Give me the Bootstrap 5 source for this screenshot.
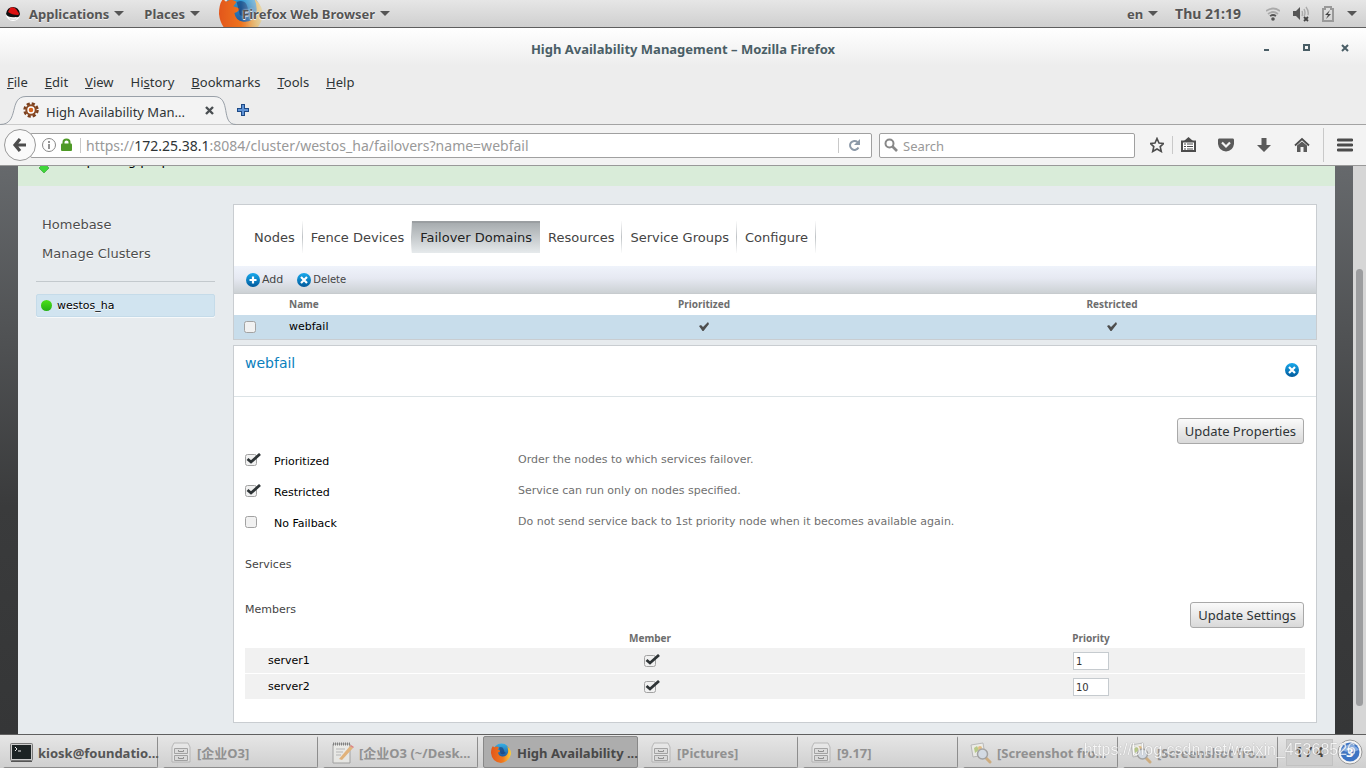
<!DOCTYPE html>
<html lang="en">
<head>
<meta charset="utf-8">
<meta name="viewport" content="width=device-width, initial-scale=1">
<title>High Availability Management</title>
<link href="https://cdn.jsdelivr.net/npm/bootstrap@5.3.0/dist/css/bootstrap.min.css" rel="stylesheet">
<style>
:root { --ui: "Noto Sans", "Noto Sans CJK SC", sans-serif; --page: "DejaVu Sans", "Noto Sans CJK SC", sans-serif; }
body { font: 13px/20px var(--ui); color: #2e3436; background: #ededed; }
svg { display: block; flex: none; }
a { color: inherit; text-decoration: none; }
button { color: inherit; }
.plain { border: 0; background: none; padding: 0; }
/* desktop panel */
.top-panel { height: 28px; background: linear-gradient(#e6e6e6, #cfcfcf); border-bottom: 1px solid #5e5e5e; color: #555; font-weight: 700; padding: 0 9px 0 5px; text-shadow: 0 1px #eee; }
.top-panel .plain { font-weight: 700; display: flex; align-items: center; gap: 5px; text-shadow: inherit; }
.status { gap: 13px; }
.clock { font-size: 14px; margin-right: 12px; }
.caret { width: 0; height: 0; border: 5px solid transparent; border-top-color: #555; border-bottom: 0; }
.fox-btn { position: relative; margin-left: 42px; }
.fox-btn svg { position: absolute; left: -23px; top: -12px; z-index: 0; }
.fox-btn span { position: relative; text-shadow: 0 0 2px #fff, 0 1px #eee; }
/* browser chrome */
.title-row { height: 38px; background: linear-gradient(#fff, #ededed); color: #4a5e66; font-weight: 700; }
.win-btns { right: 16px; top: 13px; gap: 28px; }
.menu-row { height: 30px; padding: 2px 7px 0; gap: 17px; }
.tab-row { height: 29px; border-bottom: 1px solid #a3a3a3; }
.page-tab { width: 236px; height: 29px; padding-left: 23px; }
.page-tab .tab-shape { position: absolute; left: 0; top: 0; }
.page-tab > * { position: relative; }
.page-tab a { padding: 3px 0 0 7px; }
.nav-row { height: 41px; background: #f3f3f3; border-bottom: 1px solid #999; padding: 0 13px 0 4px; }
.back { width: 32px; height: 32px; border: 1px solid #999; border-radius: 50%; background: #fafafa; z-index: 1; }
.field { height: 25px; background: #fff; border: 1px solid #a0a0a0; border-radius: 2px; }
.field input { border: 0; outline: 0; background: none; min-width: 0; padding: 2px 0 0; color: #2e3436; }
.field input::placeholder { color: #999; opacity: 1; }
.url-box { margin-left: -6px; padding-left: 11px; }
.url-text { color: #999; padding: 1px 0 0 5px; font-size: 14px; }
.url-text b { color: #2e3436; font-weight: 400; }
.vline { width: 1px; background: #c9c9c9; flex: none; }
.search-box { width: 256px; margin-left: 7px; }
/* web page */
.viewport-area { background: linear-gradient(#66696c, #3a3b3c 60%, #353637); min-height: 0; overflow: hidden; }
.sheet { background: #e7ebee; margin: 0 18px; font-family: var(--page); font-size: 11px; color: #000; min-width: 0; }
.flash { height: 20px; background: #d9ecd9; padding: 0 21px 17px; font-size: 13px; line-height: 16px; gap: 28px; overflow: hidden; }
.flash svg { margin-bottom: -4px; }
.track { width: 13px; background: #d6d6d6; }
.thumb { width: 7px; height: 77%; margin-top: 103px; border-radius: 4px; background: #9c9d9f; }
.side { width: 179px; font-size: 13px; line-height: 29px; color: #4d4d4d; text-shadow: 0 1px #fff; }
.side a { padding-left: 6px; }
.side hr { margin: 13px 0 12px; opacity: 1; border-color: #c3c9cd; }
.side .cluster { height: 23px; background: #d1e4f0; border: 1px solid #c5dbe9; border-radius: 2px; padding-left: 4px; gap: 5px; font-size: 11px; color: #000; box-shadow: 0 1px #f7f9fa; }
.dot { width: 11px; height: 11px; border-radius: 50%; background: linear-gradient(#4be01a, #25b015); }
.panel { background: #fff; border: 1px solid #c9cdd1; }
.tabs { padding: 16px 12px 13px; font-size: 13px; line-height: 34px; color: #444; }
.tabs a { height: 32px; padding: 0 7px 0 8px; border-right: 1px solid; border-image: linear-gradient(#fff, #bfc3c6, #fff) 1; }
.tabs a.on { background: linear-gradient(#a3a8ab, #e6eaec); box-shadow: inset 0 2px #9a9ea1; color: #222; border: 0; padding: 0 8px; }
.tools { height: 28px; padding: 0 12px; background: linear-gradient(#eff3fb, #e6e9f2 45%, #ccd1d4); border-bottom: 1px solid #c7cbce; color: #444; gap: 14px; }
.tools .plain { display: flex; align-items: center; gap: 2px; }
.grid { width: 100%; table-layout: fixed; border-collapse: collapse; }
.grid th { font: 700 10px/20px var(--ui); color: #6d6d6d; padding: 0; }
.grid td { height: 24px; line-height: 24px; padding: 0; }
.list-grid th { padding-bottom: 1px; }
.picked { background: #c8ddeb; }
.chk { appearance: none; width: 16px; height: 14px; margin: 0; display: block; background: url("data:image/svg+xml,%3Csvg xmlns='http://www.w3.org/2000/svg' width='16' height='14'%3E%3Crect x='.5' y='1.5' width='11' height='11' rx='2' fill='%23f1f1f1' stroke='%23a2a2a2'/%3E%3C/svg%3E") no-repeat; }
.chk:checked { background-image: url("data:image/svg+xml,%3Csvg xmlns='http://www.w3.org/2000/svg' width='16' height='14'%3E%3Crect x='.5' y='1.5' width='11' height='11' rx='2' fill='%23f1f1f1' stroke='%23a2a2a2'/%3E%3Cpath d='M2.500 6L6 9 15 1' fill='none' stroke='%232e3436' stroke-width='2.800'/%3E%3C/svg%3E"); }
.head { height: 51px; border-bottom: 1px solid #dce3e6; padding: 7px 17px 0 11px; }
.head h1 { font-size: 14px; line-height: 20px; color: #0a80bd; margin: 0; }
.push { font: 13px/24px var(--ui); height: 26px; padding: 0 7px; border: 1px solid #a9a9a9; border-radius: 3px; background: linear-gradient(#fafafa, #d9d9d9); color: #2e3436; }
.prop { height: 31px; color: #707070; }
.prop .lab { width: 273px; color: #000; gap: 13px; }
.prop label { padding-top: 4px; }
.sub { font-size: 11px; line-height: 16px; color: #444; margin: 0; }
.members { padding: 0 11px 23px; }
.members tbody tr { background: #f1f1f1; }
.members tbody tr + tr { border-top: 1px solid #fff; }
.members .grid td { height: 25px; line-height: 25px; }
.prio { width: 36px; height: 18px; display: block; margin: 1px auto 0; border: 1px solid #c6cbcf; padding: 0 2px; font: 10px/16px var(--page); color: #333; }
/* window list */
.tasks { height: 34px; border-top: 1px solid #5f5f5f; background: linear-gradient(#e6e6e6, #cfcfcf); padding: 1px 3px 0; gap: 5px; color: #555; font-weight: 700; position: relative; }
.task { flex: 0 1 155px; min-width: 0; height: 32px; display: flex; align-items: center; gap: 5px; padding: 1px 0 0 6px; border: 1px solid; border-color: transparent #8d8d8d #8d8d8d transparent; border-radius: 2px; background: none; font-weight: 700; color: #555; }
.task.dim { color: #919191; }
.task.dim svg { opacity: .55; }
.task.on { background: #adadad; border-color: #888; color: #484848; }
.pager { width: 47px; height: 27px; background: #cdcdcd; border: 1px solid #c2c2c2; font-size: 14px; color: #444; }
.stamp { position: absolute; right: 10px; top: 3px; font: 16px/24px "Liberation Sans", sans-serif; color: #fff; opacity: .75; text-shadow: 0 0 1px #777; }
</style>
</head>
<body class="vh-100 overflow-hidden d-flex flex-column">
<svg width="0" height="0" class="position-absolute">
  <defs>
    <linearGradient id="blue" x2="0" y2="1"><stop stop-color="#19a9ec"/><stop offset="1" stop-color="#00599b"/></linearGradient>
    <linearGradient id="flame" x2="1" y2="0"><stop stop-color="#e3561b"/><stop offset=".6" stop-color="#f07a1e"/><stop offset="1" stop-color="#fbd03a"/></linearGradient>
    <linearGradient id="sea" x2="0" y2="1"><stop stop-color="#35b0e6"/><stop offset="1" stop-color="#1b3f86"/></linearGradient>
    <linearGradient id="fade"><stop offset=".5" stop-color="#fff"/><stop offset="1" stop-color="#444"/></linearGradient>
    <mask id="fademask"><rect width="44" height="44" fill="url(#fade)"/></mask>
    <symbol id="fox" viewBox="0 0 20 20">
      <circle cx="10.500" cy="9" r="8.500" fill="url(#sea)"/>
      <path d="M2 3Q3 5 4 4Q6 3 8 4.500L6.500 6.500L9.500 7.500Q9 9 7 9.500Q7.500 13 11 13.500Q15.500 14 17 9.500Q17.500 6 16 3Q20 6 20 11Q18 19 10 20Q1 19 0 10Q0 5 2 3Z" fill="url(#flame)"/>
      <path d="M8 4.500Q12 3 13 7Q13 9.500 15 10Q12 12 9.500 10.500" fill="#17356f" opacity=".6"/>
    </symbol>
    <symbol id="cabinet" viewBox="0 0 20 22">
      <path d="M3 1H17L19 5V20H1V5Z" fill="#eee" stroke="#999"/><path d="M3.500 6.500H16.500V11.500H3.500ZM3.500 13.500H16.500V18.500H3.500Z" fill="#ddd" stroke="#777"/><path d="M7.500 8V9.500H12.500V8M7.500 15V16.500H12.500V15" fill="none" stroke="#555"/>
    </symbol>
    <symbol id="viewer" viewBox="0 0 22 22">
      <path d="M1 3L13 1L15 13L3 15Z" fill="#f7f7ee" stroke="#999"/><path d="M4 6L7 4L9 8L5 11Z" fill="#9aba42"/><circle cx="10" cy="6" r="2" fill="#e8a23a"/>
      <path d="M16 16L20 20" stroke="#c88c3a" stroke-width="3" stroke-linecap="round"/><circle cx="12.500" cy="12" r="5" fill="#cfdcec" stroke="#777" stroke-width="1.500"/>
    </symbol>
    <symbol id="cross" viewBox="0 0 14 14"><circle cx="7" cy="7" r="7" fill="url(#blue)"/><path d="M4 4L10 10M10 4L4 10" stroke="#fff" stroke-width="2.200"/></symbol>
    <symbol id="tick" viewBox="0 0 10 10"><path d="M0 4L2 3L4 5L9 0L10 2L4.500 9H3.500Z" fill="#4d4d4d"/></symbol>
  </defs>
</svg>

<header class="top-panel d-flex align-items-center flex-shrink-0 overflow-hidden">
  <svg width="16" height="16" viewBox="0 0 16 16" class="me-2"><circle cx="8" cy="8" r="7" fill="#fff"/><path d="M1 8Q2 1 8 1Q14 1 15 8Q14 12 11 11Q3 12 1 8Z" fill="#111"/><path d="M3 6L5 2Q8 0 11 3L13 6Q15 8 13 9Q7 9 3 6Z" fill="#d11"/><path d="M4 11Q8 14 12 12L11 14H5Z" fill="#ddd"/></svg>
  <button class="plain me-3">Applications <i class="caret"></i></button>
  <button class="plain ms-1">Places <i class="caret"></i></button>
  <button class="plain fox-btn"><svg width="44" height="44"><g mask="url(#fademask)"><use href="#fox" width="44" height="44"/></g></svg><span>Firefox Web Browser</span> <i class="caret"></i></button>
  <div class="status ms-auto d-flex align-items-center">
    <button class="plain me-1">en <i class="caret"></i></button>
    <span class="clock">Thu 21:19</span>
    <svg width="14" height="14" viewBox="0 0 14 14" fill="none" stroke="#aaa" stroke-width="1.800"><path d="M0 4Q7-1 14 4M2 7Q7 3 12 7"/><path d="M4 9Q7 7 10 9" stroke="#555"/><circle cx="7" cy="12" r="1.800" fill="#555" stroke="none"/></svg>
    <svg width="16" height="16" viewBox="0 0 16 16" fill="none" stroke="#aaa" stroke-width="1.400"><path d="M0 5H3L7 1V14L3 10H0Z" fill="#555" stroke="none"/><path d="M9 5Q10 7 9 10M11 3Q13 7 11 10M13 1Q16 5 15 9"/><path d="M11 11L15 15M15 11L11 15" stroke="#444" stroke-width="1.800"/></svg>
    <svg width="12" height="16" viewBox="0 0 12 16"><path d="M1 3H3V1H9V3H11V15H1Z" fill="none" stroke="#999" stroke-width="2"/><path d="M8 4L3 9H6L4 13L9 8H6Z" fill="#444"/></svg>
    <i class="caret"></i>
  </div>
</header>

<div class="title-row position-relative d-flex align-items-center justify-content-center flex-shrink-0 pt-1">
  High Availability Management – Mozilla Firefox
  <div class="win-btns position-absolute d-flex">
    <button class="plain" aria-label="Minimize"><svg width="11" height="14"><path d="M3 9H8" stroke="#4a5e66" stroke-width="2"/></svg></button>
    <button class="plain" aria-label="Maximize"><svg width="11" height="14"><path d="M4 4H9V9H4Z" fill="none" stroke="#4a5e66" stroke-width="2"/></svg></button>
    <button class="plain" aria-label="Close"><svg width="11" height="14"><path d="M3 4L9 10M9 4L3 10" stroke="#4a5e66" stroke-width="2"/></svg></button>
  </div>
</div>
<nav class="menu-row d-flex align-items-center flex-shrink-0">
  <a href="#"><u>F</u>ile</a><a href="#"><u>E</u>dit</a><a href="#"><u>V</u>iew</a><a href="#">Hi<u>s</u>tory</a><a href="#"><u>B</u>ookmarks</a><a href="#"><u>T</u>ools</a><a href="#"><u>H</u>elp</a>
</nav>
<div class="tab-row d-flex align-items-center flex-shrink-0">
  <div class="page-tab position-relative d-flex align-items-center">
    <svg class="tab-shape" width="236" height="29"><path d="M0 28.500C20 28.500 8 .5 26 .5H214C232 .5 220 28.500 236 28.500" fill="#f3f3f3" stroke="#99a0a8"/></svg>
    <svg width="16" height="16" viewBox="0 0 16 16"><circle cx="8" cy="8" r="6.500" fill="none" stroke="#7a3f1d" stroke-width="2.500" stroke-dasharray="3.100 2"/><circle cx="8" cy="8" r="4.700" fill="#fff" stroke="#8a4a24" stroke-width="2"/><circle cx="8" cy="8" r="2.300" fill="#d8651f"/></svg>
    <a href="#">High Availability Man...</a>
    <button class="plain ms-auto me-3 pe-1" aria-label="Close tab"><svg width="12" height="12"><path d="M2 3L9 10M9 3L2 10" stroke="#4a4f52" stroke-width="2.400"/></svg></button>
  </div>
  <button class="plain" aria-label="New tab"><svg width="14" height="14"><path d="M7 1V13M1 7H13" stroke="#1e4a86" stroke-width="4"/><path d="M7 2V12M2 7H12" stroke="#5f93d6" stroke-width="2"/></svg></button>
</div>
<div class="nav-row d-flex align-items-center flex-shrink-0">
  <button class="plain back d-flex align-items-center justify-content-center" aria-label="Back"><svg width="16" height="16"><path d="M8 2L3 8L8 14M3 8H14" fill="none" stroke="#4c4c4c" stroke-width="3.200"/></svg></button>
  <div class="field url-box d-flex align-items-center flex-grow-1">
    <svg width="14" height="14"><circle cx="7" cy="7" r="6.500" fill="none" stroke="#888"/><path d="M7 6V11M7 3V5" stroke="#888" stroke-width="1.800"/></svg>
    <svg width="12" height="14" class="ms-1"><path d="M3.500 7V4Q3.500 1.500 6.500 1.500Q9.500 1.500 9.500 4V7" fill="none" stroke="#4e9a26" stroke-width="2"/><rect x="1" y="5.500" width="11" height="7.500" rx="1" fill="#4e9a26"/></svg>
    <i class="vline ms-2" style="height:15px"></i>
    <a href="#" class="url-text flex-grow-1">https://<b>172.25.38.1</b>:8084/cluster/westos_ha/failovers?name=webfail</a>
    <i class="vline" style="height:15px"></i>
    <button class="plain px-2" aria-label="Reload"><svg width="16" height="14"><path d="M11.500 9.500A4.500 4.500 0 1 1 10.500 4" fill="none" stroke="#8c99a8" stroke-width="2"/><path d="M13 1V7H7Z" fill="#8c99a8"/></svg></button>
  </div>
  <div class="field search-box d-flex align-items-center ps-1">
    <svg width="15" height="15"><circle cx="5.500" cy="5.500" r="4" fill="none" stroke="#888" stroke-width="2"/><path d="M8.500 8.500L13 13" stroke="#888" stroke-width="2.600"/></svg>
    <input class="ms-1 flex-grow-1" type="text" placeholder="Search" aria-label="Search">
  </div>
  <div class="d-flex align-items-center" style="margin-left:15px">
    <button class="plain" aria-label="Bookmark"><svg width="14" height="16" viewBox="1 0 14 16"><path d="M8 1.500L10 6L14.500 6.500L11.200 9.600L12.300 14.500L8 12L3.700 14.500L4.800 9.600L1.500 6.500L6 6Z" fill="none" stroke="#4c4c4c" stroke-width="1.600"/></svg></button>
    <i class="vline mx-2" style="height:18px"></i>
    <button class="plain" aria-label="Library"><svg width="15" height="16"><path d="M1 4.500H14V14H1Z" fill="#fff" stroke="#4c4c4c" stroke-width="2"/><path d="M3 4L7.500 0L12 4Z" fill="#4c4c4c"/><path d="M3 7H5M6 7H12M3 9.500H5M6 9.500H12M3 12H5M6 12H12" stroke="#4c4c4c"/></svg></button>
    <button class="plain" style="margin-left:22px" aria-label="Pocket"><svg width="16" height="16"><path d="M1 1.500H15Q16 1.500 16 3V7Q15 14 8 14.500Q1 14 0 7V3Q0 1.500 1 1.500Z" fill="#5a5a5a"/><path d="M4 5.500L8 9.500L12 5.500" fill="none" stroke="#f3f3f3" stroke-width="2.200"/></svg></button>
    <button class="plain" style="margin-left:23px" aria-label="Downloads"><svg width="14" height="16"><path d="M4.500 1H9.500V8H14L7 15L0 8H4.500Z" fill="#5a5a5a"/></svg></button>
    <button class="plain" style="margin-left:23px" aria-label="Home"><svg width="16" height="16"><path d="M1 8.500L8 2L15 8.500" fill="none" stroke="#4c4c4c" stroke-width="1.800"/><path d="M3 8.500L8 4.500L13 8.500V15H9.500V10H6.500V15H3Z" fill="#5a5a5a"/></svg></button>
    <i class="vline" style="height:34px;margin:0 13px"></i>
    <button class="plain" aria-label="Menu"><svg width="16" height="14"><path d="M1 2H15M1 7H15M1 12H15" stroke="#4c4c4c" stroke-width="2.800" stroke-linecap="round"/></svg></button>
  </div>
</div>

<div class="viewport-area d-flex flex-grow-1">
  <div class="sheet flex-grow-1">
    <div class="flash d-flex align-items-end"><svg width="10" height="14"><path d="M5 4L10 9L5 14L0 9Z" fill="#3fd63a" stroke="#2c9a2c" stroke-width=".6"/></svg><span>Updating properties</span></div>
    <div class="d-flex" style="padding:18px 18px 0;gap:18px">
      <nav class="side d-flex flex-column flex-shrink-0 pt-1">
        <a href="#" style="margin-top:2px">Homebase</a>
        <a href="#">Manage Clusters</a>
        <hr>
        <a href="#" class="cluster d-flex align-items-center"><i class="dot"></i>westos_ha</a>
      </nav>
      <main class="flex-grow-1" style="min-width:0">
        <section class="panel">
          <nav class="tabs d-flex">
            <a href="#">Nodes</a><a href="#">Fence Devices</a><a href="#" class="on">Failover Domains</a><a href="#">Resources</a><a href="#">Service Groups</a><a href="#">Configure</a>
          </nav>
          <div class="tools d-flex align-items-center">
            <button class="plain"><svg width="14" height="14"><circle cx="7" cy="7" r="7" fill="url(#blue)"/><path d="M7 3.500V10.500M3.500 7H10.500" stroke="#fff" stroke-width="2.200"/></svg>Add</button>
            <button class="plain" style="font-size:10px"><svg width="14" height="14"><use href="#cross"/></svg>Delete</button>
          </div>
          <table class="grid list-grid">
            <colgroup><col style="width:55px"><col><col style="width:408px"><col style="width:408px"></colgroup>
            <thead><tr><th></th><th>Name</th><th class="text-center">Prioritized</th><th class="text-center">Restricted</th></tr></thead>
            <tbody><tr class="picked"><td><input type="checkbox" class="chk" style="margin-left:10px" aria-label="Select webfail"></td><td>webfail</td>
              <td><svg width="10" height="10" class="mx-auto"><use href="#tick"/></svg></td><td><svg width="10" height="10" class="mx-auto"><use href="#tick"/></svg></td></tr></tbody>
          </table>
        </section>
        <section class="panel" style="margin-top:5px">
          <div class="head d-flex justify-content-between align-items-start"><h1>webfail</h1><button class="plain" style="padding-top:10px" aria-label="Close details"><svg width="14" height="14"><use href="#cross"/></svg></button></div>
          <div class="text-end" style="padding:21px 12px 0"><button class="push">Update Properties</button></div>
          <div style="padding:0 11px">
            <div class="prop d-flex align-items-center"><div class="lab d-flex align-items-center"><input id="p1" type="checkbox" class="chk" checked><label for="p1">Prioritized</label></div>Order the nodes to which services failover.</div>
            <div class="prop d-flex align-items-center"><div class="lab d-flex align-items-center"><input id="p2" type="checkbox" class="chk" checked><label for="p2">Restricted</label></div>Service can run only on nodes specified.</div>
            <div class="prop d-flex align-items-center"><div class="lab d-flex align-items-center"><input id="p3" type="checkbox" class="chk"><label for="p3">No Failback</label></div>Do not send service back to 1st priority node when it becomes available again.</div>
            <h2 class="sub" style="margin:20px 0 29px">Services</h2>
          </div>
          <div class="d-flex justify-content-between" style="padding:0 12px 0 11px"><h2 class="sub">Members</h2><button class="push">Update Settings</button></div>
          <div class="members">
            <table class="grid">
              <colgroup><col style="width:178px"><col><col style="width:428px"></colgroup>
              <thead><tr><th></th><th class="text-center">Member</th><th class="text-center">Priority</th></tr></thead>
              <tbody>
                <tr><td style="padding-left:23px">server1</td><td class="ps-1"><input type="checkbox" class="chk mx-auto" checked aria-label="server1 member"></td><td><input type="text" class="prio" value="1" aria-label="server1 priority"></td></tr>
                <tr><td style="padding-left:23px">server2</td><td class="ps-1"><input type="checkbox" class="chk mx-auto" checked aria-label="server2 member"></td><td><input type="text" class="prio" value="10" aria-label="server2 priority"></td></tr>
              </tbody>
            </table>
          </div>
        </section>
      </main>
    </div>
  </div>
  <div class="track d-flex justify-content-center flex-shrink-0"><div class="thumb"></div></div>
</div>

<footer class="tasks d-flex flex-shrink-0">
  <button class="task"><svg width="23" height="20"><rect x=".5" y=".5" width="22" height="17" rx="1" fill="#ccc" stroke="#777"/><rect x="2" y="2" width="19" height="14" fill="#1c2324"/><path d="M5 4L7 6L5 8M8 8H11" fill="none" stroke="#eee"/><path d="M1 18.500H22" stroke="#555"/></svg><span class="text-nowrap">kiosk@foundatio...</span></button>
  <button class="task dim"><svg width="22" height="22"><use href="#cabinet"/></svg><span class="text-truncate">[企业O3]</span></button>
  <button class="task dim"><svg width="24" height="22"><path d="M3 2H20V21H3Z" fill="#f5f5f0" stroke="#777"/><path d="M3 2H20" stroke="#333" stroke-width="3" stroke-dasharray="1 1"/><path d="M6 7H15M6 10H13M6 13H11" stroke="#999"/><path d="M9 17L20 4L23 6L12 18Z" fill="#e8942f"/><path d="M20 4L21 3L24 5L23 6Z" fill="#d33"/></svg><span class="text-truncate">[企业O3 (~/Desk...</span></button>
  <button class="task on"><svg width="22" height="22"><use href="#fox" width="20" height="20" x="1" y="1"/></svg><span class="text-nowrap">High Availability ...</span></button>
  <button class="task dim"><svg width="22" height="22"><use href="#cabinet"/></svg><span class="text-truncate">[Pictures]</span></button>
  <button class="task dim"><svg width="22" height="22"><use href="#cabinet"/></svg><span class="text-truncate">[9.17]</span></button>
  <button class="task dim"><svg width="22" height="22"><use href="#viewer"/></svg><span class="text-truncate">[Screenshot fro...</span></button>
  <button class="task dim"><svg width="22" height="22"><use href="#viewer"/></svg><span class="text-truncate">[Screenshot fro...</span></button>
  <div class="ms-auto d-flex align-items-center gap-1">
    <div class="pager d-flex align-items-center justify-content-center">1 / 4</div>
    <svg width="26" height="26"><circle cx="13" cy="13" r="12" fill="#f5f5f5" stroke="#999"/><circle cx="13" cy="13" r="9.500" fill="#3d74c4"/><path d="M4 11Q13 0 22 11Q13 15 4 11Z" fill="#86aee6"/><text x="9" y="18" fill="#fff" font-size="13">3</text></svg>
  </div>
  <div class="stamp">https://blog.csdn.net/weixin_45368526</div>
</footer>
<script src="https://cdn.jsdelivr.net/npm/bootstrap@5.3.0/dist/js/bootstrap.bundle.min.js"></script>
</body>
</html>
